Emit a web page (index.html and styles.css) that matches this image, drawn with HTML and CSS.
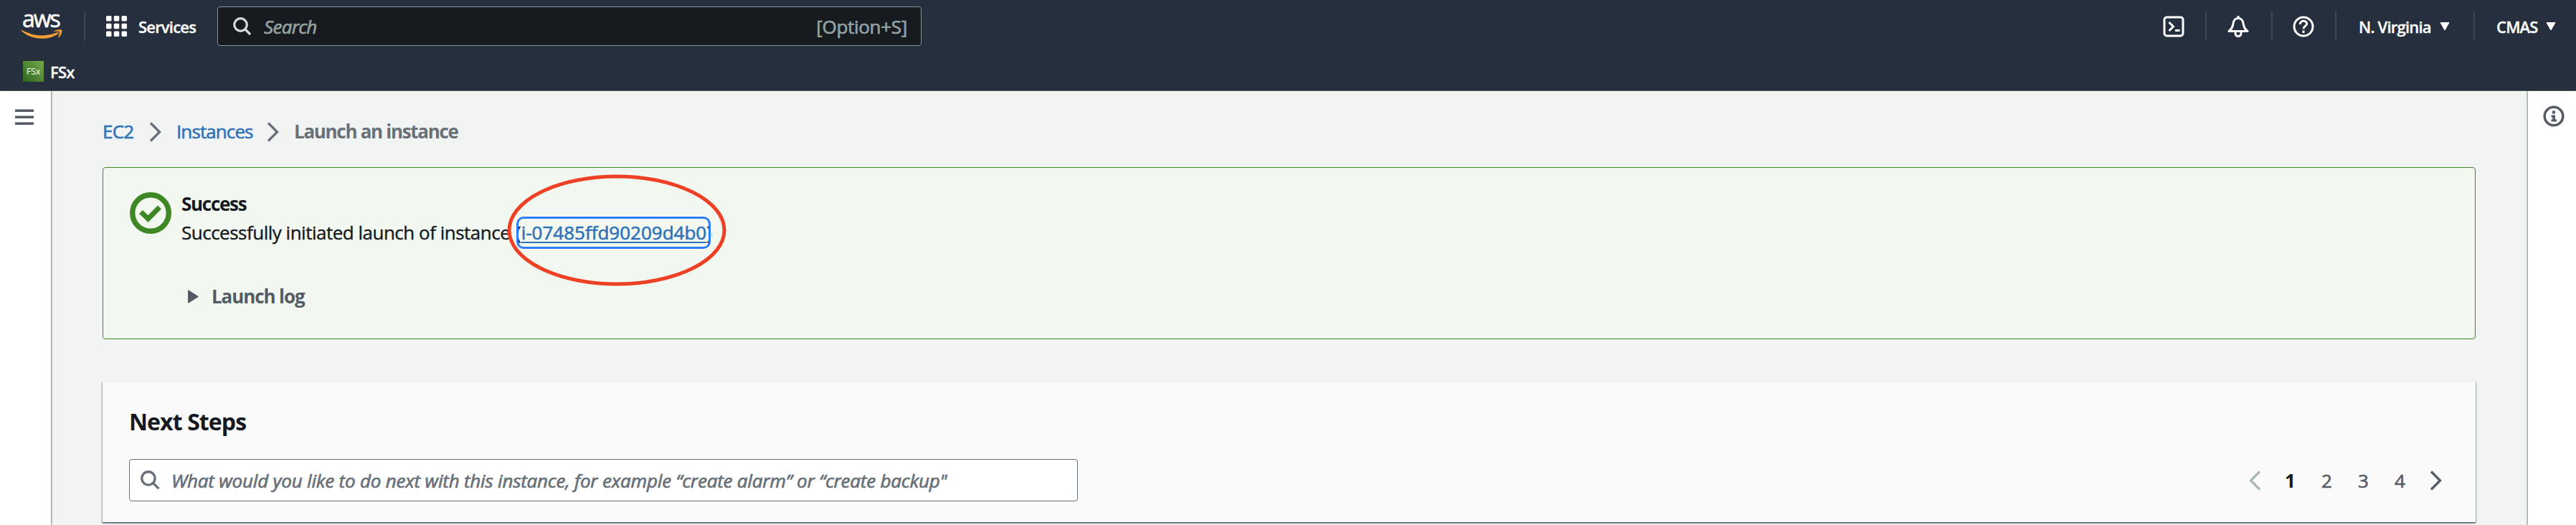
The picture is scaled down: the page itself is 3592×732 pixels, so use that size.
FILE: index.html
```html
<!DOCTYPE html>
<html lang="en">
<head>
<meta charset="utf-8">
<title>Launch an instance | EC2</title>
<link rel="stylesheet" href="styles.css">
</head>
<body>
<header class="header">
  <div class="nav">
    <a class="logo"><span class="logo-text">aws</span>
      <svg class="smile" width="58" height="14" viewBox="0 0 58 14"><path d="M.4 1.6Q0 .3 1.6 1C19 10.500 36 10 50.500 4.300 52.500 3.500 53.500 5 52 6.200 38 16 14 15.300.4 1.600Z" fill="#f29d38"/><path d="M46.500 2.300C50 -.2 56.500 -.3 57.300.8 58 2.500 56.500 8 53.300 11 52.400 11.800 51.900 11.300 52.300 10.300 53.300 7.700 54.500 4.300 53.800 3.300 53 2.400 49.500 2.700 47.300 3 46.300 3.100 45.800 2.800 46.500 2.300Z" fill="#f29d38"/></svg>
    </a>
    <i class="divider divider-logo"></i>
    <svg class="grid" width="29" height="29" viewBox="0 0 29 29" fill="#fff"><rect width="7.500" height="7.500" rx="1.500"/><rect x="10.800" width="7.500" height="7.500" rx="1.500"/><rect x="21.500" width="7.500" height="7.500" rx="1.500"/><rect y="10.800" width="7.500" height="7.500" rx="1.500"/><rect x="10.800" y="10.800" width="7.500" height="7.500" rx="1.500"/><rect x="21.500" y="10.800" width="7.500" height="7.500" rx="1.500"/><rect y="21.500" width="7.500" height="7.500" rx="1.500"/><rect x="10.800" y="21.500" width="7.500" height="7.500" rx="1.500"/><rect x="21.500" y="21.500" width="7.500" height="7.500" rx="1.500"/></svg>
    <span class="nav-text services">Services</span>
    <div class="search">
      <svg width="26" height="26" viewBox="0 0 26 26" fill="none" stroke="#d5dbdb" stroke-width="3.200"><circle cx="10.500" cy="10.500" r="8.800"/><path d="M16.500 16.500 24 24"/></svg>
      <span class="search-text">Search</span>
      <span class="shortcut">[Option+S]</span>
    </div>
    <div class="tools">
      <svg class="shell" width="30" height="30" viewBox="0 0 30 30" fill="none" stroke="#fff" stroke-width="3"><rect x="2" y="2" width="26" height="26" rx="3.500"/><path d="M8.500 9 14.500 15 8.500 21M17 20.500H23.500"/></svg>
      <i class="divider"></i>
      <svg class="bell" width="30" height="30" viewBox="0 0 30 30" fill="none" stroke="#fff" stroke-width="3"><path d="M15 0V4M2 21.500C6.500 18 7.500 15 8 10.500 8.500 6 11.500 3.500 15 3.500S21.500 6 22 10.500C22.500 15 23.500 18 28 21.500Z" stroke-linejoin="round"/><path d="M11 22V24.500A4 4 0 0 0 19 24.500V22"/></svg>
      <i class="divider"></i>
      <svg class="help" width="30" height="30" viewBox="0 0 30 30" fill="none" stroke="#fff" stroke-width="3"><circle cx="15" cy="15" r="13"/><path d="M10.300 12V11.500C10.300 5.800 19.700 6 19.700 11.300 19.700 14.500 15 14 15 18.300M15 20.500V24"/></svg>
      <i class="divider"></i>
      <span class="nav-text region">N. Virginia</span>
      <svg width="14" height="12" viewBox="0 0 14 12"><path d="M1 .5H13L7 11Z" fill="#fff" stroke="#fff" stroke-linejoin="round"/></svg>
      <i class="divider divider-account"></i>
      <span class="nav-text account">CMAS</span>
      <svg width="14" height="12" viewBox="0 0 14 12"><path d="M1 .5H13L7 11Z" fill="#fff" stroke="#fff" stroke-linejoin="round"/></svg>
    </div>
  </div>
  <div class="favorites"><span class="fsx-icon">FSx</span><span class="nav-text">FSx</span></div>
</header>
<div class="layout">
  <aside class="side side-left">
    <svg width="26" height="23" viewBox="0 0 26 23" fill="#545b64"><path d="M0 .5H26V4H0ZM0 9.500H26V13H0ZM0 18.500H26V22H0Z"/></svg>
  </aside>
  <main class="main">
    <nav class="crumbs">
      <a class="crumb-ec2">EC2</a>
      <svg width="18" height="28" viewBox="0 0 18 28" fill="none" stroke="#687078" stroke-width="3.400"><path d="M2 1.500 14.500 14 2 26.500"/></svg>
      <a class="crumb-instances">Instances</a>
      <svg width="18" height="28" viewBox="0 0 18 28" fill="none" stroke="#687078" stroke-width="3.400"><path d="M2 1.500 14.500 14 2 26.500"/></svg>
      <b class="crumb-current">Launch an instance</b>
    </nav>
    <section class="alert">
      <svg class="check" width="58" height="58" viewBox="0 0 58 58" fill="none" stroke="#3f8624"><circle cx="29" cy="29" r="25.300" stroke-width="7.400"/><path d="M15.500 27.500 25.500 37 41.500 21" stroke-width="7"/></svg>
      <div class="alert-body">
        <b class="alert-title">Success</b>
        <p class="alert-text"><span class="message">Successfully initiated launch of instance</span><span class="instance">(<a class="instance-link">i-07485ffd90209d4b0</a>)<svg class="annotation" width="306" height="156" viewBox="0 0 306 156"><ellipse cx="153" cy="78" rx="150" ry="75" fill="none" stroke="#ed4024" stroke-width="5"/></svg></span></p>
        <div class="log"><svg width="15" height="19" viewBox="0 0 15 19"><path d="M1 1.500V17.500L13.500 9.500Z" fill="#545b64" stroke="#545b64" stroke-width="2" stroke-linejoin="round"/></svg><b>Launch log</b></div>
      </div>
    </section>
    <section class="card">
      <h2 class="card-title">Next Steps</h2>
      <div class="card-row">
        <div class="filter">
          <svg width="27" height="27" viewBox="0 0 26 26" fill="none" stroke="#687078" stroke-width="3.200"><circle cx="10.500" cy="10.500" r="8.800"/><path d="M16.500 16.500 24.500 24.500"/></svg>
          <span class="filter-text">What would you like to do next with this instance, for example “create alarm” or “create backup"</span>
        </div>
        <div class="pages">
          <svg width="18" height="28" viewBox="0 0 18 28" fill="none" stroke="#aab7b8" stroke-width="3.400"><path d="M16 1.500 3.500 14 16 26.500"/></svg>
          <b>1</b><span>2</span><span>3</span><span>4</span>
          <svg width="18" height="28" viewBox="0 0 18 28" fill="none" stroke="#545b64" stroke-width="3.400"><path d="M2 1.500 14.500 14 2 26.500"/></svg>
        </div>
      </div>
    </section>
  </main>
  <aside class="side side-right">
    <svg width="30" height="30" viewBox="0 0 30 30"><circle cx="15" cy="15" r="12.800" fill="none" stroke="#545b64" stroke-width="3.500"/><path d="M13 7.500H17V11.500H13ZM11.500 13.500H17V19.500H19V22.500H11.500V19.500H13.300V16.500H11.500Z" fill="#545b64"/></svg>
  </aside>
</div>
</body>
</html>
```

FILE: styles.css
```css
* { box-sizing: border-box; }
body {
  margin: 0;
  width: 3592px;
  height: 732px;
  overflow: hidden;
  background: #f2f3f3;
  color: #16191f;
  font-family: "Open Sans", "Noto Sans", sans-serif;
  font-size: 26px;
  line-height: 36px;
  white-space: nowrap;
}
svg { display: block; flex: none; }
.header { height: 127px; background: #262f3e; border-bottom: 1px solid #545b64; }
.nav { height: 73px; display: flex; align-items: center; padding-left: 29px; }
.logo { width: 58px; height: 36px; display: flex; flex-direction: column; }
.logo-text { height: 22px; padding-left: 2px; font-size: 32px; line-height: 13px; letter-spacing: -2px; color: #fff; -webkit-text-stroke: 0.6px; }
.divider { flex: none; width: 2px; height: 41px; background: #414750; }
.divider-logo { margin: 0 29px 0 30px; }
.nav-text { color: #fff; font-size: 22px; font-weight: 600; letter-spacing: -0.8px; -webkit-text-stroke: 0.3px; }
.services { width: 110px; margin-left: 16px; }
.search {
  width: 982px;
  height: 55px;
  display: flex;
  align-items: center;
  padding: 0 19px 0 21px;
  border: 1px solid #879596;
  border-radius: 4px;
  background: #171a1e;
  color: #95a1a1;
}
.search-text { margin-left: 17px; font-style: italic; letter-spacing: -0.7px; -webkit-text-stroke: 0.7px; }
.shortcut { margin-left: auto; letter-spacing: -0.3px; -webkit-text-stroke: 0.7px; }
.tools { margin-left: auto; display: flex; align-items: center; padding-right: 28px; }
.shell { margin-right: 29px; }
.bell { margin: 0 31px 0 29px; }
.help { margin: 0 29px 0 28px; }
.region { width: 113px; margin-left: 31px; }
.account { width: 69px; margin-left: 30px; }
.divider-account { margin-left: 33px; }
.favorites { height: 53px; display: flex; align-items: center; gap: 9px; padding-left: 32px; }
.fsx-icon {
  width: 29px;
  height: 29px;
  background: linear-gradient(45deg, #2d6420, #76aa4b);
  color: #f2f8ec;
  font-size: 13px;
  line-height: 29px;
  letter-spacing: -0.4px;
  text-align: center;
}
.layout { height: 605px; display: flex; align-items: stretch; }
.side { flex: none; background: #fff; }
.side-left { width: 71px; padding: 25px 0 0 21px; box-shadow: 1px 0 2px rgba(0, 28, 36, 0.5); }
.side-right { width: 67px; padding: 20px 0 0 21px; box-shadow: -1px 0 2px rgba(0, 28, 36, 0.5); }
.main { flex: 1; padding: 38px 73px 0 72px; }
.crumbs { height: 36px; display: flex; align-items: center; color: #687078; }
.crumbs a { color: #2e73b8; -webkit-text-stroke: 0.6px; }
.crumbs svg { margin-top: 1px; }
.crumb-ec2 { width: 65px; letter-spacing: -0.8px; }
.crumb-instances { width: 126px; margin-left: 20px; letter-spacing: -0.9px; }
.crumb-current { margin-left: 20px; letter-spacing: -1.3px; }
.alert {
  height: 240px;
  margin-top: 32px;
  padding: 34px 37px;
  display: flex;
  gap: 14px;
  border: 1px solid #3f8624;
  border-radius: 4px;
  background: #f2f8f0;
}
.alert-title { display: block; margin-top: -2px; letter-spacing: -1.3px; }
.alert-text { margin: 4px 0 0; display: flex; -webkit-text-stroke: 0.4px; }
.message { width: 467px; letter-spacing: -0.5px; }
.instance {
  position: relative;
  width: 271px;
  height: 45px;
  margin-top: -4px;
  line-height: 44px;
  text-indent: -1px;
}
/* Focus ring, drawn over the parentheses on either side of the link */
.instance::after {
  content: "";
  position: absolute;
  inset: 0;
  border: 3px solid #2e7cf6;
  border-radius: 10px;
  box-shadow: 0 0 0 1px #fff;
}
.instance-link { color: #2e73b8; text-decoration: underline; text-decoration-thickness: 2px; text-underline-offset: 3px; -webkit-text-stroke: 0.6px; }
.annotation { position: absolute; left: -13px; top: -59px; }
.log { display: flex; align-items: center; gap: 18px; margin: 48px 0 0 9px; color: #545b64; letter-spacing: -1.1px; }
.card {
  height: 196px;
  margin-top: 59px;
  padding: 34px 46px 0 37px;
  background: #fafafa;
  box-shadow: 0 1px 1px rgba(0, 28, 36, 0.3), 1px 1px 2px rgba(0, 28, 36, 0.3), -1px 1px 2px rgba(0, 28, 36, 0.3), 0 2px 1px rgba(0, 28, 36, 0.2);
}
.card-title { margin: 0; font-size: 32px; line-height: 44px; letter-spacing: -0.9px; }
.card-row { display: flex; justify-content: space-between; align-items: center; margin-top: 30px; }
.filter {
  width: 1323px;
  height: 59px;
  display: flex;
  align-items: center;
  gap: 16px;
  padding-left: 15px;
  border: 1px solid #687078;
  border-radius: 4px;
  background: #fff;
  color: #687078;
}
.filter-text { font-style: italic; letter-spacing: -0.2px; -webkit-text-stroke: 0.7px; }
.pages { display: flex; align-items: center; color: #545b64; }
.pages b, .pages span { width: 51px; text-align: center; }
.pages b { margin-left: 15px; color: #16191f; }
.pages span { -webkit-text-stroke: 0.6px; }
.pages span:last-of-type { margin-right: 16px; }
```
